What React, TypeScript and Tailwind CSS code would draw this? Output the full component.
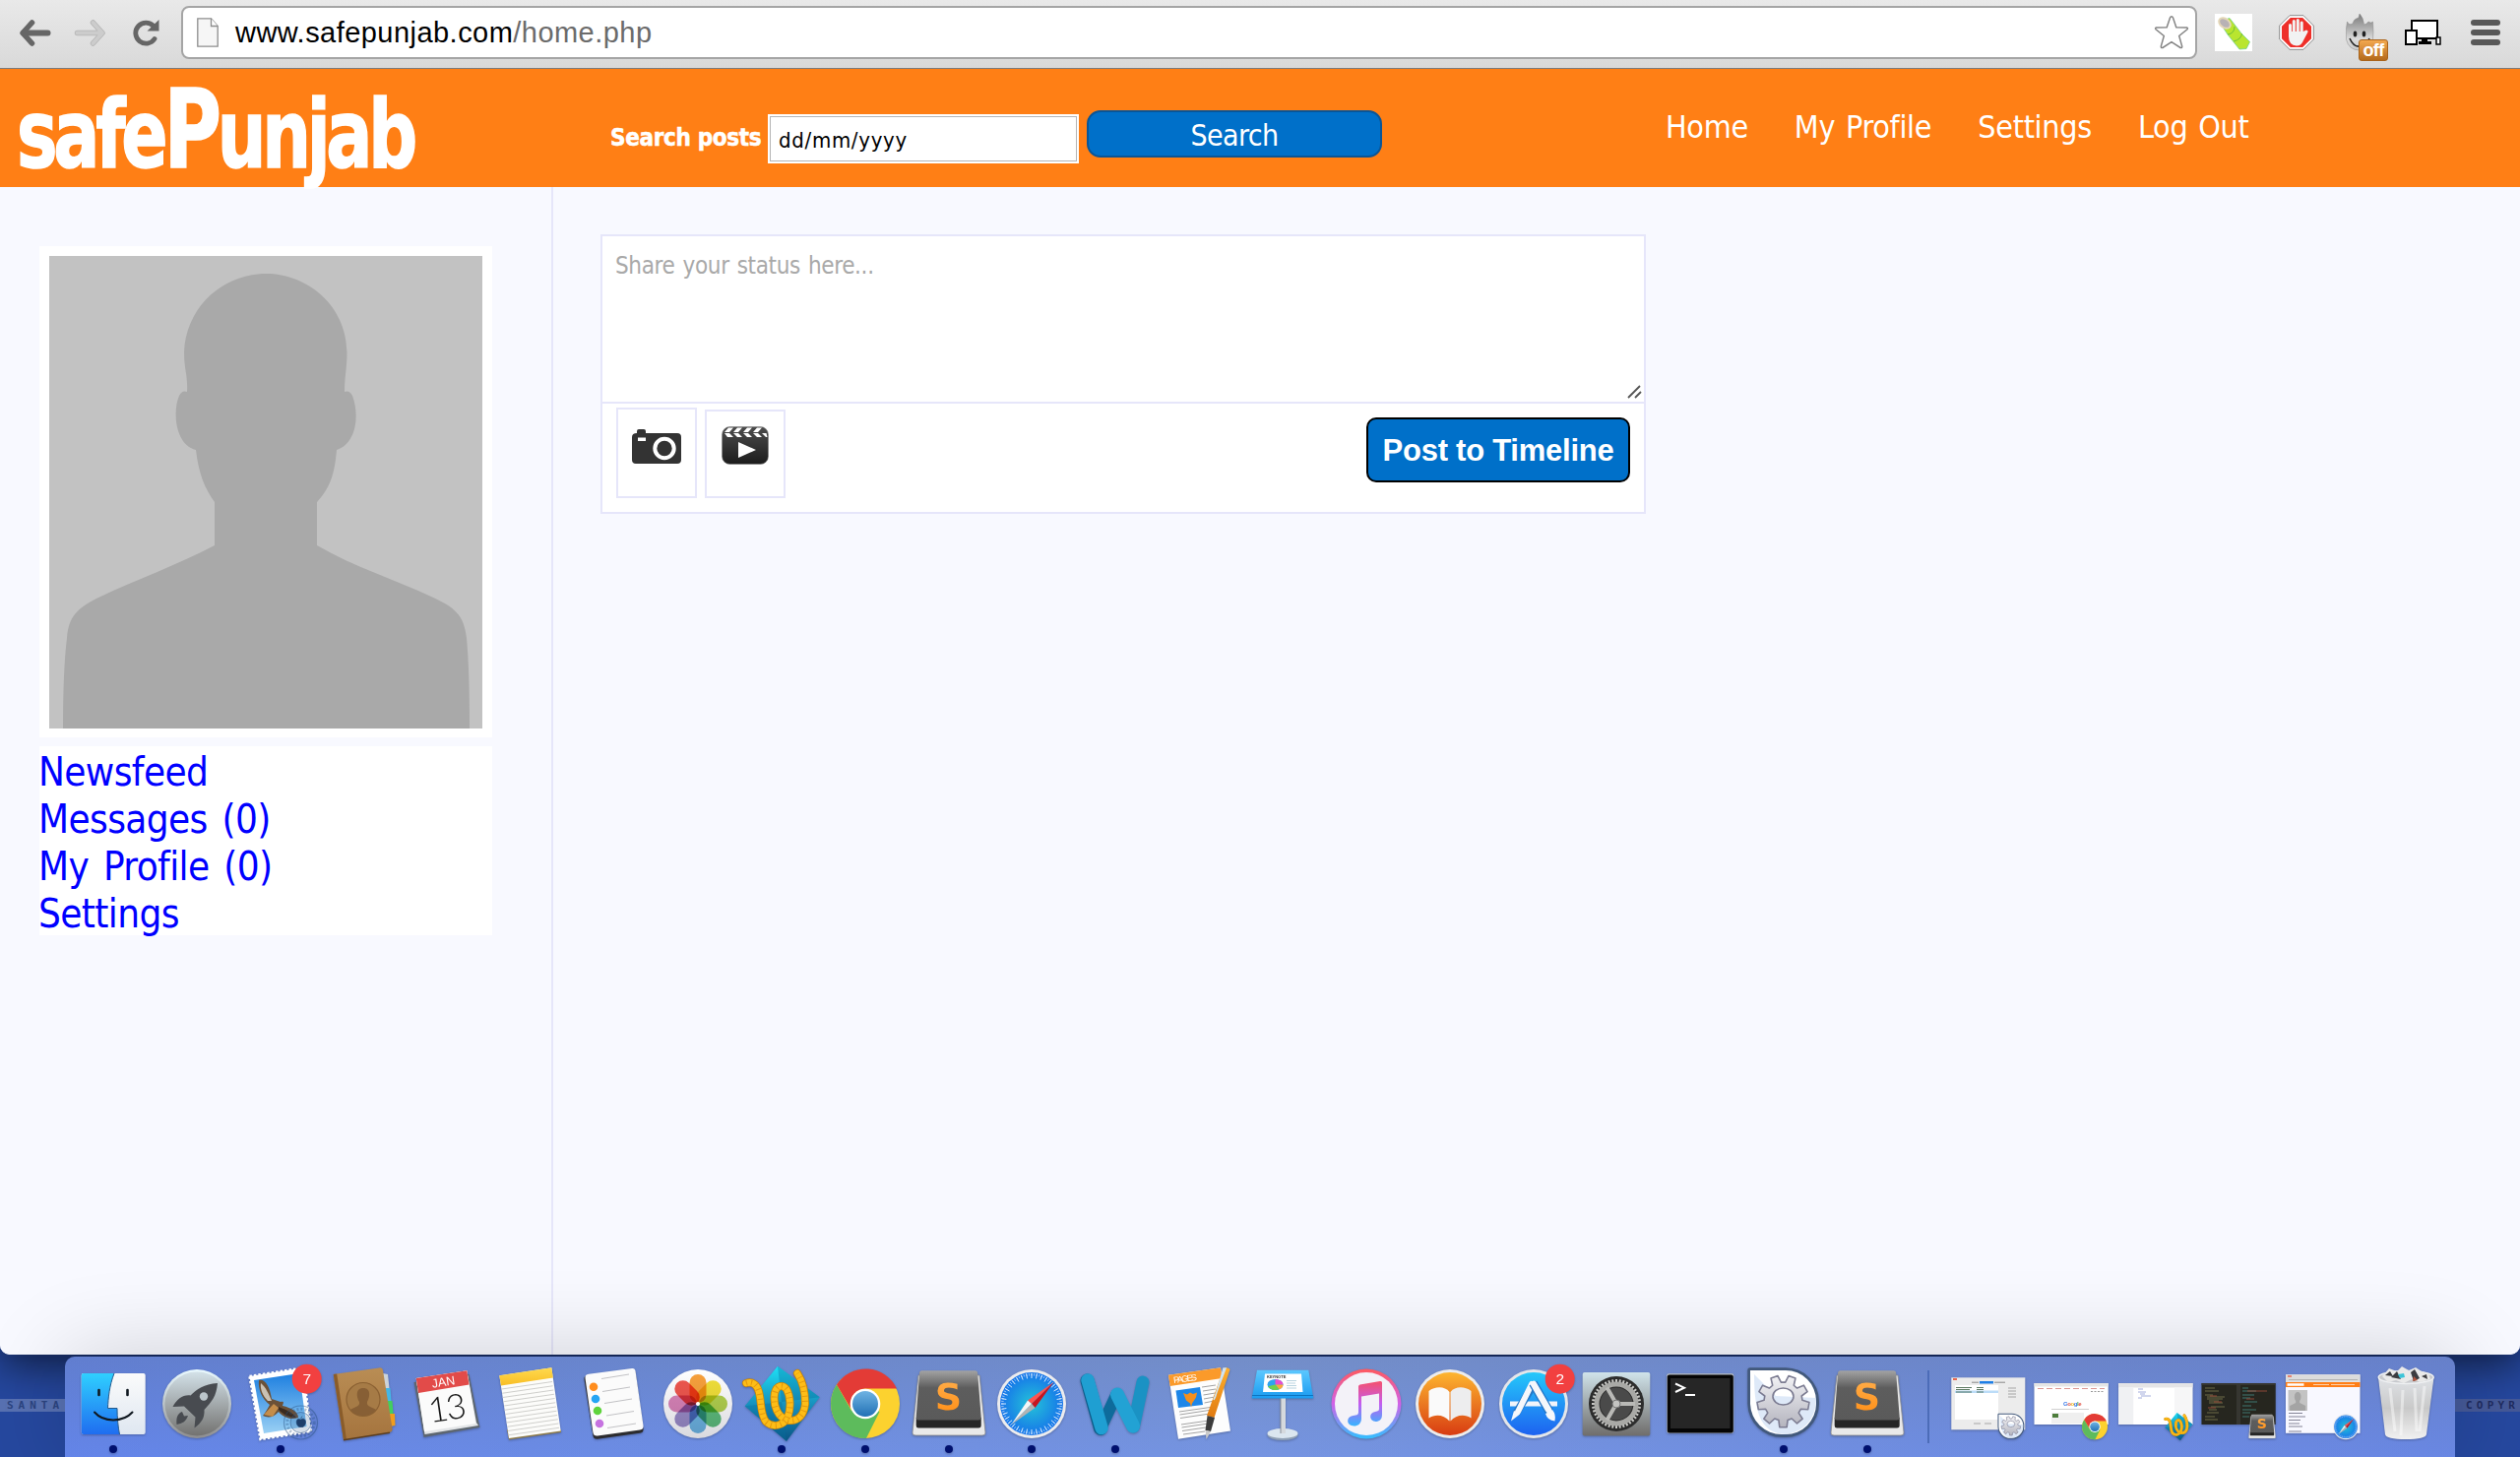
import React from 'react';

const SANS = "font-['DejaVu_Sans_Condensed','DejaVu_Sans',sans-serif] [font-stretch:condensed]";

function rays(n: number, cx: number, cy: number, r1: number, r2: number) {
  return Array.from({ length: n }, (_, i) => {
    const a = (i * 2 * Math.PI) / n;
    return `M${(cx + r1 * Math.cos(a)).toFixed(2)} ${(cy + r1 * Math.sin(a)).toFixed(2)}L${(cx + r2 * Math.cos(a)).toFixed(2)} ${(cy + r2 * Math.sin(a)).toFixed(2)}`;
  }).join('');
}

function gearPath(n: number, cx: number, cy: number, r1: number, r2: number) {
  const pts: string[] = [];
  const step = (2 * Math.PI) / n;
  for (let i = 0; i < n; i++) {
    const a = i * step - Math.PI / 2 + step / 2;
    [
      [-0.34, r1],
      [-0.2, r2],
      [0.2, r2],
      [0.34, r1],
    ].forEach(([o, r]) => {
      pts.push(`${(cx + r * Math.cos(a + o * step)).toFixed(2)} ${(cy + r * Math.sin(a + o * step)).toFixed(2)}`);
    });
  }
  return `M${pts.join('L')}Z`;
}

function Defs() {
  const g = (id: string, stops: [number, string][], x2 = 0, y2 = 1) => (
    <linearGradient key={id} id={id} x1="0" y1="0" x2={x2} y2={y2}>
      {stops.map(([o, c]) => (
        <stop key={o} offset={o} stopColor={c} />
      ))}
    </linearGradient>
  );
  return (
    <svg className="absolute h-0 w-0">
      <defs>
        {g('finder', [[0, '#2fd0ff'], [1, '#1f6df0']])}
        {g('paper', [[0, '#fbfbfb'], [1, '#dfe7f1']])}
        {g('launch', [[0, '#d3e1e8'], [1, '#737270']])}
        {g('rim', [[0, '#eafaff'], [1, '#8d8d8f']])}
        {g('sky', [[0, '#1d7fe0'], [1, '#9ad0f4']])}
        {g('book', [[0, '#b98d54'], [1, '#a5743e']])}
        {g('yellow', [[0, '#ffd94e'], [1, '#f8be25']])}
        {g('white', [[0, '#ffffff'], [1, '#d9d9de']])}
        {g('diamond', [[0, '#1de0f6'], [0.5, '#1792be'], [1, '#0a5585']])}
        {g('subl', [[0, '#a3a3a3'], [0.35, '#5d5d5d'], [1, '#5a5a5a']])}
        {g('sletter', [[0, '#ffb04e'], [1, '#ff8c12']])}
        {g('orange', [[0, '#fdb52f'], [1, '#d83c12']])}
        {g('store', [[0, '#25c8fa'], [1, '#1d62f0']])}
        {g('prefs', [[0, '#d0e3ea'], [1, '#6f6d6b']])}
        {g('wd', [[0, '#2bb5e3'], [1, '#1183b8']])}
        {g('key', [[0, '#5cc8ff'], [1, '#1a9bf0']])}
        {g('note', [[0, '#f5516c'], [0.5, '#c45cf0'], [1, '#36b4ff']])}
        {g('ring', [[0, '#ff5a5e'], [0.5, '#d061e8'], [1, '#33c0ff']])}
        {g('blueball', [[0, '#6fb3e3'], [1, '#2271b5']])}
        {g('flame', [[0, '#7a7a7a'], [0.35, '#a9a9a9'], [0.7, '#dcdcdc'], [1, '#c9c9c9']])}
        {g('clap', [[0, '#4c4c4c'], [1, '#1c1c1c']])}
        {g('pen', [[0, '#ffb02e'], [1, '#e07a10']])}
        {g('bin', [[0, '#dfe2e6'], [0.5, '#c9c9c9'], [1, '#f1f1f1']])}
        {g('gear', [[0, '#f2f2f5'], [1, '#b4b4be']])}
        <radialGradient id="safari">
          <stop offset="0" stopColor="#24c3d8" />
          <stop offset="1" stopColor="#1674ea" />
        </radialGradient>
      </defs>
    </svg>
  );
}

function Badge({ n }: { n: string }) {
  return (
    <g>
      <circle cx="68.7" cy="22.7" r="15" fill="#f24040" />
      <text x="68.7" y="28" textAnchor="middle" fontSize="15.500" fill="#fff" fontFamily="Liberation Sans, sans-serif">{n}</text>
    </g>
  );
}

const Finder = () => (
  <g>
    <rect x="9.7" y="17" width="65" height="62" rx="2" fill="url(#paper)" />
    <path d="M11.7 17H43C38 30 37 42 36.500 52.500H46C46 62 47 72 48.500 79H11.700a2 2 0 0 1-2-2V19a2 2 0 0 1 2-2z" fill="url(#finder)" />
    <path d="M43 17C38 30 37 42 36.500 52.500H46C46 62 47 72 48.500 79" fill="none" stroke="#245a8c" strokeWidth="1" />
    <path d="M27.500 34v5M56.500 34v5" stroke="#101820" strokeWidth="2.600" strokeLinecap="round" />
    <path d="M23 56.500C32 67 52 67 61.500 56.500" fill="none" stroke="#101820" strokeWidth="2" strokeLinecap="round" />
  </g>
);
const Launchpad = () => (
  <g>
    <circle cx="42" cy="48" r="35" fill="url(#rim)" />
    <circle cx="42" cy="48" r="32.500" fill="url(#launch)" />
    <path d="M63 27C49 28 42 33 35.500 39.500C28 38.500 22 43 17.500 51L29 50.500L40.500 61.500L39.500 72.500C47 67 50 62 49.500 54C57 46 62 40 63 27z" fill="#484b50" />
    <path d="M27 56C22 58 21 62 21.500 69C27 68 31 66 33 60L29 60.500z" fill="#484b50" />
    <circle cx="49" cy="40.500" r="4.200" fill="#bcc6cb" />
  </g>
);
const Mail = () => (
  <g>
    <path d="M10.500 20L64.500 11.500L73 76L21.500 84z" fill="#fff" stroke="#fff" strokeWidth="2.500" strokeDasharray="2.500 2" />
    <path d="M15 24L61 17L68.500 71L25 78z" fill="url(#sky)" />
    <path d="M20 24C26 22 31 30 33 43L42 46C46 45 45 47 44 50C53 52 60 56 60 62C52 65 44 61 40 56C34 63 28 62 24 60C27 56 29 53 31 49C23 43 19 33 20 24z" fill="#6b5138" />
    <path d="M22 27C27 31 30 38 33 45L29 45C24 40 21 33 22 27z" fill="#c9c1b4" />
    <path d="M25 59L35 48L40 52L34 61z" fill="#c48d4b" />
    <path d="M40 51C48 54 54 57 58 62C51 62 45 59 40 54z" fill="#3a2b20" />
    <circle cx="62.500" cy="67" r="17" fill="none" stroke="#29507f" strokeOpacity=".45" strokeWidth="1.200" />
    <circle cx="62.500" cy="67" r="10.500" fill="#2a5b93" fillOpacity=".2" stroke="#29507f" strokeOpacity=".5" />
    <circle cx="62.500" cy="67" r="13.700" fill="none" stroke="#29507f" strokeOpacity=".35" strokeWidth="3" strokeDasharray="2 2" />
    <path d="M62.500 64c3-2 5 0 5 2.500s-2 5-3 5h-3c-2 0-4-4-3-6.500s3-1.500 4-1zM62.500 63l1.500-2.500" fill="#1d3e6a" stroke="#1d3e6a" strokeWidth=".6" />
    <Badge n="7" />
  </g>
);
const Contacts = () => (
  <g>
    <path d="M61 17l5 1 1.500 14-5 1z" fill="#ccd3da" />
    <path d="M63 32l5.500 0 1 13-5 1z" fill="#44b7e6" />
    <path d="M64 45l6.500 0 1 13-5 1z" fill="#43cf5d" />
    <path d="M66 58l7 0 .5 12-5 1z" fill="#f09d1e" />
    <path d="M10.700 18L57 11.400Q60.500 11 61 14L70.500 73Q71 76.500 67.500 77L21 84.500z" fill="url(#book)" />
    <path d="M10.700 18l3.500-.5L24 84l-3 .7z" fill="#8a5c2a" />
    <path d="M21 84.700L68 77.300" stroke="#5c3d1c" strokeWidth="1.500" />
    <circle cx="41" cy="43.500" r="17" fill="#a67b46" stroke="#8a6032" strokeWidth="1.200" />
    <path d="M41 32c8 0 7 9 4 14-1 5 5 5 9 8-6 8-20 8-26 0 4-3 10-3 9-8-3-5-4-14 4-14z" fill="#875f35" />
  </g>
);
const Calendar = () => (
  <g>
    <path d="M8.500 26l56-8 11 54-57 10z" fill="#5d6670" />
    <path d="M10.700 22L62.300 14.300L72 67L74 70L19.500 79z" fill="#e4e6e8" />
    <path d="M10.700 22L62.300 14.300L71.300 68L19 76.300z" fill="#fbfbfb" />
    <path d="M10.700 22L62.300 14.300L64.500 28.500L13 37z" fill="#e24b49" />
    <text transform="translate(39 30) rotate(-8.500)" textAnchor="middle" fontSize="12.500" fill="#fff" fontFamily="Liberation Sans, sans-serif">JAN</text>
    <text transform="translate(43 64.500) rotate(-8.500)" textAnchor="middle" fontSize="35" fill="#161616" letterSpacing="-2" fontFamily="Lato, sans-serif" fontWeight="300">13</text>
  </g>
);
const Notes = () => (
  <g>
    <path d="M20 84.500L73 77v-3H18z" fill="#8c7a49" />
    <path d="M10.300 19.300L63.300 11.300L72.700 75.500L20 83z" fill="#fcfcfa" />
    <path d={Array.from({ length: 12 }, (_, i) => `M${12.5 + i * 0.64} ${33 + i * 4.25}l51.500-7.500`).join('')} stroke="#c9c9c6" strokeWidth=".9" fill="none" />
    <path d="M10.300 19.300L63.300 11.300L64.800 21.500L12 29.500z" fill="url(#yellow)" />
  </g>
);
const Reminders = () => (
  <g>
    <path d="M11.500 22Q11 18 15 17.700L59 12Q63 11.500 63.600 15L71.500 72Q72 76 68 76.500L25 82.500Q21 83 20.400 79z" fill="#2c2c2f" transform="translate(0 1.200)" />
    <path d="M12.500 22Q12 18 16 17.700L60 12Q63 11.500 63.600 15L71.500 70Q72 74 68 74.500L25 80.500Q21 81 20.400 77z" fill="#fbfbfb" />
    <circle cx="21" cy="30.700" r="4.300" fill="#ff8d1e" />
    <circle cx="23" cy="43" r="4.300" fill="#25a5f4" />
    <circle cx="25" cy="55" r="4.300" fill="#5fd33c" />
    <circle cx="27" cy="68" r="4.300" fill="#c673e0" />
    <path d="M29 22.500l28-4.500M30 35.500l28-4.500M32 47.500l28-4.500M34 60l28-4.500M35 72.500l29-4.500" stroke="#c2c2c5" strokeWidth="1" />
  </g>
);
const Photos = () => (
  <g>
    <circle cx="42" cy="48" r="35" fill="url(#white)" />
    {['#f79421', '#f0dc1e', '#a9cc35', '#48b56b', '#5aacdf', '#8d7cc0', '#d573ae', '#ee4035'].map((c, i) => (
      <rect key={c} x="33.500" y="18" width="17" height="29" rx="8.500" fill={c} fillOpacity=".88" transform={`rotate(${i * 45} 42 48)`} className="mix-blend-multiply" />
    ))}
    <circle cx="42" cy="48" r="2" fill="#fff" />
  </g>
);
const WebWork = () => {
  const d = 'M6 27C12 25 17 28 19 36C22 48 20 58 26 66C33 73 44 70 48 62C52 52 51 40 47 33C43 28 37 29 35 37C33 50 38 62 49 65C60 66 65 58 66 48C66 36 64 26 58 17';
  return (
    <g>
      <path d="M38 9.700L80.700 41.300L47 86L4.700 50.300z" fill="url(#diamond)" />
      <path d="M38 9.700L42 46L80.700 41.300zM42 46L47 86L4.700 50.300z" fill="#0a6c9c" fillOpacity=".35" />
      <path d={d} fill="none" stroke="#c98308" strokeWidth="8" strokeLinecap="round" />
      <path d={d} fill="none" stroke="#fdbd17" strokeWidth="6.500" strokeLinecap="round" />
      <path d={d} fill="none" stroke="#e59a0d" strokeWidth="6" strokeDasharray="1 4" />
    </g>
  );
};
const Chrome = () => (
  <g>
    <circle cx="42" cy="48" r="35" fill="#fcd22f" />
    <path d="M42 48L56.500 56L43 83A35 35 0 0 1 13 28.500L28 55z" fill="#5dbb5c" />
    <path d="M13 28.500A35 35 0 0 1 74 32.500H42A16 16 0 0 0 27.500 53z" fill="#e33b36" />
    <circle cx="42" cy="48" r="15.300" fill="#fff" />
    <circle cx="42" cy="48" r="13" fill="url(#blueball)" />
  </g>
);
const Sublime = () => (
  <g>
    <path d="M11 19H73L79 77Q79.500 80 76 80H8Q4.500 80 5 77z" fill="#e9e9e9" stroke="#8c8c8c" strokeWidth=".8" />
    <path d="M8.700 62H74.700V70Q74.700 72.500 72 72.500H11Q8.700 72.500 8.700 70z" fill="#262626" />
    <path d="M14.500 14.300H68.500Q71 14.300 71.200 17L74.700 61.500Q74.700 64.500 72 64.500H11Q8.500 64.500 8.700 61.500L12 17Q12.200 14.300 14.500 14.300z" fill="url(#subl)" />
    <text x="41.500" y="54" textAnchor="middle" fontSize="38" fontWeight="700" fill="url(#sletter)" fontFamily="DejaVu Sans, sans-serif" className="[font-stretch:normal]">S</text>
  </g>
);
const Safari = () => (
  <g>
    <circle cx="42" cy="48" r="35" fill="#ececee" />
    <circle cx="42" cy="48" r="32" fill="url(#safari)" />
    <path d={rays(36, 42, 48, 26, 31)} stroke="#e8f4ff" strokeWidth=".9" />
    <path d={rays(72, 42, 48, 28.5, 31)} stroke="#e8f4ff" strokeWidth=".6" />
    <path d="M64.500 26L38 44.500L42 48z" fill="#ff5350" />
    <path d="M64.500 26L45.500 52L42 48z" fill="#c9141e" />
    <path d="M21 69.500L38 44.500L42 48z" fill="#f5f5f5" />
    <path d="M21 69.500L45.500 52L42 48z" fill="#b3b3b3" />
  </g>
);
const Word = () => (
  <g fill="none" strokeLinecap="round" strokeLinejoin="round">
    <path d="M28 71L43 39" stroke="#0e6b9b" strokeWidth="12" />
    <path d="M60.500 71L70 26" stroke="#1a92c4" strokeWidth="13" />
    <path d="M13.500 24.500L27 73" stroke="#0c5c8a" strokeWidth="14" />
    <path d="M14 24L28 72.500" stroke="#1f9fd2" strokeWidth="13.500" />
    <path d="M44 38.500L60 70.500" stroke="#22a2d4" strokeWidth="14" />
  </g>
);
const Pages = () => (
  <g>
    <path d="M11 18.700L64 11.300L74 75.500L21 83.700z" fill="#fdfdfd" />
    <path d="M11 18.700L64 11.300L65.500 22L12.700 30z" fill="#fb9a2a" />
    <text transform="translate(16.500 27) rotate(-7.500)" fontSize="9" fill="#fff" fontFamily="Liberation Sans, sans-serif" letterSpacing="-1.600">PAGES</text>
    <path d="M18.500 34.500L43 31L46 49L21 52z" fill="#1d86e8" />
    <path d="M26 37l4 1.500 3-2 3 1.500 4-1.500-1 5-4 6-1 4-1-4-4-3z" fill="#f58f1d" />
    <path d="M45 31l14-2M46 35l13-2M46.500 39l12-2M47 43l11-2M47.500 47l10-2M22 56l35-5M22.500 59l33-5M23 62.500l30-4.500M24 69l28-4M24.500 72l27-4M25 75.500l24-3.500M26 79l22-3" stroke="#8b8b8b" strokeWidth=".8" />
    <path d="M67 12Q71 10 73.500 13L57.500 62L50 60z" fill="url(#pen)" />
    <path d="M67 12L69 12L57 44L58.500 41z" fill="#cfe4f3" stroke="#cfe4f3" strokeWidth="1.500" />
    <path d="M50.500 60L58 62L54 76L48.500 75z" fill="#3b3b3b" />
    <path d="M48.500 75L54 76L49.500 84z" fill="#c9c9c9" />
  </g>
);
const Keynote = () => (
  <g>
    <ellipse cx="42" cy="79.500" rx="15.500" ry="5.500" fill="#8fa0b5" />
    <ellipse cx="42" cy="78" rx="15.500" ry="5" fill="#dbe6ef" />
    <rect x="40" y="42" width="5" height="36" fill="#d5d9dd" />
    <path d="M40 42v36" stroke="#8b929a" />
    <path d="M16 13.700H68.300L73.300 42.500H10.700z" fill="url(#key)" />
    <path d="M11 39.500H73" stroke="#0d74c0" strokeWidth="1" />
    <path d="M24 17.500H61L62.500 36H22z" fill="#fff" />
    <text x="26" y="21.500" fontSize="4" fontWeight="700" fill="#333" fontFamily="Liberation Sans, sans-serif">KEYNOTE</text>
    <ellipse cx="34.500" cy="28.500" rx="8" ry="5.500" fill="#2ea3ee" />
    <path d="M34.500 28.500V23a8 5.500 0 0 1 8 5.500z" fill="#e74fd0" />
    <path d="M34.500 28.500h8a8 5.500 0 0 1-4 4.800z" fill="#ffa63a" />
    <path d="M34.500 28.500l4 4.800a8 5.500 0 0 1-11.500-3z" fill="#6fd04c" />
    <path d="M46 24.500h10M46 27h9M46 29.500h10M46 32h10" stroke="#b9d4e0" strokeWidth="1" />
  </g>
);
const ITunes = () => (
  <g>
    <circle cx="42" cy="48" r="35.500" fill="url(#ring)" />
    <circle cx="42" cy="48" r="32" fill="#f3f2f8" />
    <path d="M34 30.500Q34 28.800 35.500 28.500L56 25Q58 24.800 58 26.500V59C58 65 54 66 51.500 66C45 66 44 57 51 56C54 55.500 55 55 55 53V37.500L37 40.500V63C37 68 33.500 70.500 29.500 70.500C21.500 70.500 21 61 28.500 60C33 59.500 34 59 34 56z" fill="url(#note)" />
  </g>
);
const IBooks = () => (
  <g>
    <circle cx="42" cy="48" r="35" fill="#ececec" />
    <circle cx="42" cy="48" r="32" fill="url(#orange)" />
    <path d="M20.500 35C27 30 37 30 41.500 36V65.500C36 59 27 58 20.500 62.500z" fill="#fafafa" />
    <path d="M63.500 35C57 30 47 30 42.500 36V65.500C48 59 57 58 63.500 62.500z" fill="#ededee" />
  </g>
);
const AppStore = () => (
  <g>
    <circle cx="42" cy="48" r="35" fill="#e4e6ea" />
    <circle cx="42" cy="48" r="32" fill="url(#store)" />
    <path d="M18 48H66" stroke="#f1f4fa" strokeWidth="5" />
    <path d="M42 28L24 58" stroke="#2477c8" strokeWidth="8" />
    <path d="M40 28L26 56" stroke="#f5f7fb" strokeWidth="6" strokeLinecap="round" />
    <path d="M22 55l6 3.500-9 7z" fill="#f5f7fb" />
    <path d="M41.500 27L58 56" stroke="#2477c8" strokeWidth="9" />
    <path d="M42 28L57 54" stroke="#f5f7fb" strokeWidth="6.500" strokeLinecap="round" />
    <path d="M54 58l7-4q4 5 2.500 11.500Q56 65 54 58z" fill="#f5f7fb" />
    <Badge n="2" />
  </g>
);
const Prefs = () => (
  <g>
    <rect x="7.700" y="16" width="68.600" height="64.500" rx="2" fill="url(#prefs)" />
    <circle cx="42" cy="48" r="28" fill="#2c2c2c" />
    <path d={rays(40, 42, 48, 20, 25)} stroke="#c9c9c6" strokeWidth="2" />
    <circle cx="42" cy="48" r="20" fill="none" stroke="#a9a9a6" strokeWidth="5" />
    <circle cx="42" cy="48" r="16.500" fill="#4a4a4a" />
    <path d="M42 48H61M42 48L32.500 31.500M42 48L32.500 64.500" stroke="#b9b9b6" strokeWidth="4" />
    <circle cx="42" cy="48" r="4" fill="#c3c3c1" stroke="#777" />
  </g>
);
const Terminal = () => (
  <g>
    <rect x="8.300" y="17.300" width="68" height="60.500" rx="2" fill="#b9bfc4" />
    <rect x="8.800" y="18.500" width="67" height="59" rx="2" fill="#050505" />
    <rect x="12" y="22" width="60.500" height="51" fill="#262626" />
    <path d="M17 27.500L26 31.700L17 36" fill="none" stroke="#fff" strokeWidth="2" />
    <path d="M27 39H37" stroke="#fff" strokeWidth="2" />
  </g>
);
const GearApp = () => (
  <g>
    <path d="M8 11.300H44A34 34 0 0 1 78 45V48A34 34 0 0 1 44 82H40A34.700 34.700 0 0 1 5.300 48V14Q5.300 11.300 8 11.300z" fill="#42597c" />
    <path d="M8 14H44A31 31 0 0 1 75 45V48A31 31 0 0 1 44 79H40A32 32 0 0 1 8 48z" fill="#fff" />
    <path d="M12 18L34 40L75 42C75 60 66 76 44 79C20 78 12 60 12 18z" fill="#c8daf3" fillOpacity=".6" />
    <path fillRule="evenodd" d={`${gearPath(9, 41.5, 45.5, 19.5, 26.5)}M52 40.500a10.500 8.500 0 1 0-21 0a10.500 8.500 0 1 0 21 0z`} fill="url(#gear)" stroke="#7c7c92" strokeWidth="1.600" strokeLinejoin="round" />
  </g>
);
const Trash = () => (
  <g>
    <path d="M13 21L20 79Q21 84 41 84Q61 84 62 79L69.500 21z" fill="url(#bin)" />
    <ellipse cx="41.200" cy="21" rx="28" ry="6.500" fill="#c7c9cd" stroke="#eef0f2" strokeWidth="1.500" />
    <path d="M17 20l7-8 8 3 5-5 7 4 7-3 6 4 7 2 2 6-10 3-9-3-8 4-8-3-8 2z" fill="#e9e9e9" />
    <path d="M20 19l5-4 3 5zM26 21l6-6 4 8zM46 16l4-3 5 9-6 3zM57 20l5-2 1 5z" fill="#3c3c40" />
    <path d="M33 18l6-1 1 4-5 1z" fill="#3cc4d8" />
    <path d="M49 20l4 4-5 1z" fill="#b3543c" />
    <path d="M25 32l5 44M38 34l-2 46M50 32l2 44M60 30l-5 46" stroke="#fff" strokeOpacity=".45" strokeWidth="3" />
  </g>
);

function Mini({ children }: { children: React.ReactNode }) {
  return <g transform="translate(49.500 53.500) scale(.37)">{children}</g>;
}

const ThumbPanel = () => (
  <g>
    <rect x="4.300" y="21.300" width="75" height="53" fill="#ececec" />
    <path d="M6 23h4" stroke="#e9694f" strokeWidth="2" />
    <rect x="33" y="25" width="14" height="2.500" fill="#1e7fe6" />
    <path d="M25 26.200h7M48 26.200h11" stroke="#888" />
    <rect x="8" y="29" width="44" height="35" fill="#fff" />
    <rect x="8" y="34.500" width="44" height="2.500" fill="#bcdcf8" />
    <path d="M9 31.500h16M30 31.500h7M9 33.500h14M30 33.500h7M9 36h16M30 36h7" stroke="#4b6b50" strokeWidth=".9" />
    <path d="M62 32h8M62 35h8M62 38h8M62 41h8M27 68h7M38 68h7" stroke="#bdbdbd" strokeWidth="1.500" />
    <Mini><GearApp /></Mini>
  </g>
);
const ThumbGoogle = () => (
  <g>
    <rect x="3.500" y="27" width="75.200" height="42" fill="#fff" />
    <rect x="3.500" y="27" width="75.200" height="3.500" fill="#e5e5e5" />
    <path d="M7 32.500h68" stroke="#d98a86" strokeWidth=".9" strokeDasharray="6 3" />
    <text x="33" y="50" fontSize="6" fontFamily="Liberation Sans, sans-serif" fontWeight="700" letterSpacing="-.4"><tspan fill="#3d7be8">G</tspan><tspan fill="#e2493b">o</tspan><tspan fill="#efb41a">o</tspan><tspan fill="#3d7be8">g</tspan><tspan fill="#3aa455">l</tspan><tspan fill="#e2493b">e</tspan></text>
    <path d="M21 53.500h38" stroke="#d0d0d0" />
    <rect x="21" y="57" width="33" height="11" fill="#efefef" />
    <rect x="22" y="58" width="6" height="4" fill="#4d7d3b" />
    <path d="M61 35.500h13" stroke="#999" strokeDasharray="2 1.500" />
    <Mini><Chrome /></Mini>
  </g>
);
const ThumbEditor = () => (
  <g>
    <rect x="4.300" y="27" width="75.200" height="42" fill="#fff" />
    <rect x="4.300" y="27" width="75.200" height="4.500" fill="#e4e4e6" />
    <rect x="4.300" y="31.500" width="15" height="37.500" fill="#f0f1f3" />
    <rect x="61" y="31.500" width="18" height="37.500" fill="#f6f6f7" />
    <path d="M24 33h5M24 36h8M26 38h5M27 40h10M24 42h4" stroke="#98a4d8" strokeWidth=".9" />
    <Mini><WebWork /></Mini>
  </g>
);
const ThumbCode = () => (
  <g>
    <rect x="3.500" y="27" width="75.200" height="42" fill="#26261f" />
    <path d="M3.500 28h75M40 28v41M42 28v41" stroke="#3c3c38" strokeWidth="1.500" />
    <path d="M7 32h10M7 35h14M7 39h8M9 41h18M9 43h16M11 45h10M11 47h14M13 51h14M11 54h8M9 57h12M7 61h10M7 64h13" stroke="#77754c" strokeWidth=".9" />
    <path d="M45 32h6M45 35h14M45 39h12M45 42h8M47 46h13M45 50h9M45 54h14M45 57h8M45 61h7" stroke="#417f78" strokeWidth=".9" />
    <path d="M12 40h7M16 46h8M10 52h8M50 35h20M49 43h8" stroke="#a8503f" strokeWidth=".8" />
    <Mini><Sublime /></Mini>
  </g>
);
const ThumbSite = () => (
  <g>
    <rect x="4" y="18.300" width="75.500" height="59.500" fill="#f8f8ff" />
    <rect x="4" y="18.300" width="75.500" height="7.500" fill="#dcdcdc" />
    <path d="M6 20h4" stroke="#e9694f" strokeWidth="1.500" />
    <path d="M7 23.500h70" stroke="#a8a8a8" strokeWidth=".8" />
    <rect x="4" y="26" width="75.500" height="5" fill="#ff7e16" />
    <path d="M5.500 28.500h17" stroke="#fff" strokeWidth="2.500" />
    <path d="M32 28.500h16M50 28.500h24" stroke="#ffd0a8" />
    <rect x="6.500" y="34" width="19.500" height="21" fill="#c3c3c3" />
    <path d="M16.200 36c4 0 4 7 2 9v2l6 3v5h-16v-5l6-3v-2c-2-2-2-9 2-9z" fill="#a4a4a4" />
    <path d="M7 57.500h14M7 61h17M7 64.500h12M7 68h11M7 71h14M7 76h13" stroke="#76768a" strokeWidth=".9" />
    <Mini><Safari /></Mini>
  </g>
);

function Slot({ children, running, wide }: { children: React.ReactNode; running?: boolean; wide?: boolean }) {
  return (
    <div className={wide ? 'h-[102px] w-[85px] shrink-0' : 'h-[102px] w-[84.86px] shrink-0'}>
      <svg viewBox="0 0 84 102" className="mx-auto h-[102px] w-[84px] overflow-visible drop-shadow-[0_1px_1px_rgba(0,0,0,0.25)]">
        {children}
        {running && <circle cx="42" cy="94" r="4" fill="#00106e" />}
      </svg>
    </div>
  );
}

function Toolbar() {
  return (
    <div className="flex h-[70px] shrink-0 items-start border-b border-[#7b7b7b] bg-linear-to-b from-[#e9e9e9] to-[#d9d9d9] pl-5">
      <svg viewBox="0 0 32 28" className="mt-5 h-7 w-8" fill="none" stroke="#666" strokeLinejoin="round" strokeLinecap="round">
        <path d="M12.500 3L3 13.500L12.500 24" strokeWidth="5.500" />
        <path d="M4 13.500H28.500" strokeWidth="6" />
      </svg>
      <svg viewBox="0 0 32 28" className="mt-5 ml-[23px] h-7 w-8" fill="none" strokeLinejoin="round" strokeLinecap="round">
        <path d="M19.500 3L29 13.500L19.500 24M28 13.500H3.500" strokeWidth="5.500" stroke="#b5b5b5" />
        <path d="M19.500 3L29 13.500L19.500 24M28 13.500H3.500" strokeWidth="4" stroke="#cccccc" />
      </svg>
      <svg viewBox="0 0 28 28" className="mt-[19px] ml-[27px] h-7 w-7">
        <path d="M22 7.500A10.500 10.500 0 1 0 23 20.500" fill="none" stroke="#666" strokeWidth="4.800" strokeLinecap="round" />
        <path d="M27.500 1V12.500H15.500z" fill="#666" />
      </svg>
      <div className="mt-1.5 ml-[22px] flex h-[54px] w-[2048px] items-center rounded-lg border-2 border-[#a5a5a5] bg-white pr-1.5 pl-[14px]">
        <svg viewBox="0 0 22 30" className="h-[30px] w-[22px]">
          <path d="M.8.800H14.500L21.200 8.500V29.200H.8z" fill="#f6f6f6" stroke="#8d8d8d" strokeWidth="1.300" />
          <path d="M14.500.8V8.500H21.200" fill="#fff" stroke="#8d8d8d" strokeWidth="1.300" />
        </svg>
        <div className="ml-[17px] pt-px font-['Liberation_Sans',sans-serif] text-[29px] leading-none tracking-[0.46px] text-black">
          www.safepunjab.com<span className="text-[#6b6b6b]">/home.php</span>
        </div>
        <svg viewBox="0 0 36 36" className="ml-auto h-9 w-9">
          <path d="M18 1.800Q19 1.800 19.500 3L22.800 12.800L33.500 13Q35 13.500 34 14.800L25.700 21.500L28.700 32Q28.800 34 27 33.500L18 27.700L9 33.500Q7.200 34 7.300 32L10.300 21.500L2 14.800Q1 13.500 2.500 13L13.200 12.800L16.500 3Q17 1.800 18 1.800z" fill="#fff" stroke="#858585" strokeWidth="1.500" />
        </svg>
      </div>
      <svg viewBox="0 0 38 38" className="mt-3.5 ml-[18px] h-[38px] w-[38px] bg-white">
        <path d="M4.500 8L15 4.500L27 20L35.500 28.500L32 35.500L25 36L13 21z" fill="#b9e52f" stroke="#6fcf8b" strokeWidth=".8" />
        <ellipse cx="10" cy="9.500" rx="6.500" ry="4.500" transform="rotate(38 10 9.500)" fill="#b8b2b5" stroke="#e4d7b7" strokeWidth="2" />
        <path d="M13 21Q20 20 20 13M19 28Q27 26 27.500 20" fill="none" stroke="#6fbf3a" />
      </svg>
      <svg viewBox="0 0 36 36" className="mt-[15px] ml-[27px] h-9 w-9">
        <path d="M11 .7H25L35.300 11V25L25 35.300H11L.7 25V11z" fill="#fff" stroke="#8b8b8b" strokeWidth="1" />
        <path d="M11.800 3H24.200L33 11.800V24.200L24.200 33H11.800L3 24.200V11.800z" fill="#ee2f29" />
        <path d="M11.500 21V10.500M15.300 19V6.500M19.300 19V5.500M23.200 20V8" stroke="#f2f2f2" strokeWidth="3" strokeLinecap="round" />
        <path d="M10 17H24.700L28 15.500Q30.500 16 29 18.500L25 26Q23 31.500 18 31.500Q10 31 10 22z" fill="#f2f2f2" />
      </svg>
      <div className="relative mt-3.5 ml-8 h-12 w-11">
        <svg viewBox="0 0 44 48" className="h-12 w-11">
          <path d="M14 0Q18 4 18.500 11Q21 11 23 8Q26 10 27.500 8Q28.500 20 27.500 26Q25 37 14 37Q3 37 .5 26Q-.5 17 1.500 8Q3 12 7 10Q8 5 13 4z" fill="url(#flame)" stroke="#8a8a8a" strokeWidth=".5" />
          <path d="M4 25Q8 34 14 33Q20 33 24 25" fill="none" stroke="#222" strokeWidth="1.600" />
          <ellipse cx="9.500" cy="20.500" rx="1.800" ry="3" fill="#222" />
          <ellipse cx="18.500" cy="20.500" rx="1.800" ry="3" fill="#222" />
        </svg>
        <div className="absolute top-[26px] left-[13px] flex h-[22px] w-[30px] items-center justify-center rounded-[3px] border border-[#a8631b] bg-linear-to-b from-[#f3a84f] to-[#b46a1b] font-['Liberation_Sans',sans-serif] text-[18px] leading-none font-bold tracking-[-0.6px] text-white">off</div>
      </div>
      <svg viewBox="0 0 37 26" className="mt-5 ml-4 h-[26px] w-[37px]" fill="#fff" stroke="#000" strokeWidth="2">
        <rect x="7" y="1" width="26" height="18" />
        <path d="M17 19h6v3h4v3H14v-3h3z" fill="#000" stroke="none" />
        <rect x="1" y="11" width="11" height="14" />
        <rect x="32" y="18" width="4" height="7" strokeWidth="1.500" />
      </svg>
      <div className="mt-5 ml-[30px] flex w-[30px] flex-col gap-1">
        <div className="h-1.5 rounded-full bg-[#585858]" />
        <div className="h-1.5 rounded-full bg-[#585858]" />
        <div className="h-1.5 rounded-full bg-[#585858]" />
      </div>
    </div>
  );
}

function Header() {
  return (
    <header className="flex h-[120px] shrink-0 items-start bg-[#ff7f15] text-white">
      <div className="h-[120px] w-[620px] shrink-0 pl-[17px]">
        <div className="mt-0.5 w-max origin-left scale-x-[0.8] text-[97px] leading-[120px] font-bold tracking-[-5.3px] whitespace-nowrap [-webkit-text-stroke:1.500px_white]">
          safe<span className="text-[111px]">P</span>unjab
        </div>
      </div>
      <div className="mt-[50px] w-40 shrink-0 text-[24px] leading-10 font-bold tracking-[-0.35px] whitespace-nowrap [-webkit-text-stroke:0.500px_white]">Search posts</div>
      <div className="mt-[46px] h-[50px] w-[316px] shrink-0 border-2 border-white bg-white">
        <div className="h-full border border-[#b5b5b5] pl-2 text-[22px] leading-[47px] tracking-[0.7px] text-black">dd/mm/yyyy</div>
      </div>
      <div className="mt-[42px] ml-2 flex h-12 w-[300px] shrink-0 items-center justify-center rounded-[14px] border-2 border-[#0a5596] bg-[#0070c9] pt-1 text-[30px] leading-none tracking-[-0.6px]">Search</div>
      <nav className="mt-[39px] ml-[288px] flex gap-[47px] text-[32px] leading-10 tracking-[-0.3px] [word-spacing:2px] whitespace-nowrap">
        <a>Home</a>
        <a>My Profile</a>
        <a>Settings</a>
        <a>Log Out</a>
      </nav>
    </header>
  );
}

function Sidebar() {
  return (
    <aside className="w-[562px] shrink-0 border-r-2 border-[#e6e6fa] pt-[60px] pl-10">
      <div className="flex h-[499px] w-[460px] justify-center bg-white pt-2.5">
        <svg viewBox="0 0 440 480" className="h-[480px] w-[440px] bg-[#c2c2c2]">
          <path d="M220 18C262 18 302 50 302.500 98C302.500 115 300 122 300 138Q305 136 308 142C315 160 313 190 292 197C290 222 285 236 272 250V294C310 316 350 328 388 346C412 357 421 364 424 388Q427 420 427 480H14Q14 420 18 388C20 366 28 358 50 347C90 328 130 314 168 294V250C158 236 152 222 149 197C128 192 125 158 132 142Q135 136 140 138C141 122 137 115 137 98C139 50 178 18 220 18z" fill="#a9a9a9" />
        </svg>
      </div>
      <ul className="mt-[9px] h-48 w-[460px] bg-white text-[40px] leading-12 tracking-[-0.6px] text-[#0000ff] [word-spacing:4px]">
        {['Newsfeed', 'Messages (0)', 'My Profile (0)', 'Settings'].map((t) => (
          <li key={t} className="-ml-px h-12 pt-0.5">{t}</li>
        ))}
      </ul>
    </aside>
  );
}

function Composer() {
  return (
    <section className="mt-12 ml-12 h-[284px] w-[1062px] border-2 border-[#e6e6fa] bg-white">
      <div className="relative h-[170px] border-b-2 border-[#e6e6fa] pt-2.5 pl-[13px] text-[24px] leading-10 tracking-[-0.35px] text-[#a9a9a9] [word-spacing:1.500px]">
        Share your status here...
        <svg viewBox="0 0 16 16" className="absolute right-0.5 bottom-0.5 h-4 w-4" stroke="#555" strokeWidth="1.800">
          <path d="M2 14L14 2M9 14L15 8" />
        </svg>
      </div>
      <div className="flex items-start pl-3.5">
        <div className="mt-1 flex h-[92px] w-[82px] justify-center border-2 border-[#e6e6fa] pt-[19px]">
          <svg viewBox="0 0 50 37" className="h-[37px] w-[50px]">
            <path d="M5 5V3Q5 1 7 1H12Q14 1 14 3V5H46Q50 5 50 9V32Q50 36 46 36H4Q0 36 0 32V9Q0 5 5 5z" fill="#333" />
            <rect x="6" y="9.500" width="8" height="3.500" fill="#fff" />
            <circle cx="33" cy="20.500" r="9.700" fill="#333" stroke="#fff" strokeWidth="4" />
          </svg>
        </div>
        <div className="mt-1.5 ml-2 flex h-[90px] w-[82px] justify-center border-2 border-[#e6e6fa] pt-[15px]">
          <svg viewBox="0 0 48 39" className="h-[39px] w-12">
            <rect x=".5" y=".5" width="47" height="38" rx="8" fill="url(#clap)" stroke="#888" strokeWidth=".6" />
            <path d="M7 1.500l5 0-4 4.500h-5zM16 1.500h5l-4 4.500h-5zM26 1.500h5l-4 4.500h-5zM36 1.500h5l-4 4.500h-5zM3 7h5l4 4h-6zM12 7h5l4 4h-5zM22 7h5l4 4h-5zM32 7h5l4 4h-5zM41 7h4.500l1 4H45z" fill="#fff" />
            <path d="M17 16L35 24L17 32z" fill="#fff" />
          </svg>
        </div>
        <div className="mt-3.5 mr-3.5 ml-auto flex h-[66px] w-[268px] items-center justify-center rounded-[10px] border-2 border-black bg-[#0070c9] pt-px font-['Liberation_Sans',sans-serif] text-[31px] leading-none font-bold tracking-[-0.25px] whitespace-nowrap text-white">Post to Timeline</div>
      </div>
    </section>
  );
}

function Dock() {
  return (
    <div className="relative mt-0.5 flex h-[102px] w-[2428px] shrink-0 rounded-t-[10px] bg-linear-to-r from-[#6585e3] via-[#7c99da] to-[#6c88dc] pl-[6.500px] shadow-[0_0_90px_rgba(0,0,0,0.18)]">
      <div className="pointer-events-none absolute inset-0 rounded-t-[10px] bg-linear-to-b from-[#50607f]/20 to-[#5c82ff]/20" />
      <div className="relative flex">
        <Slot running><Finder /></Slot>
        <Slot><Launchpad /></Slot>
        <Slot running><Mail /></Slot>
        <Slot><Contacts /></Slot>
        <Slot><Calendar /></Slot>
        <Slot><Notes /></Slot>
        <Slot><Reminders /></Slot>
        <Slot><Photos /></Slot>
        <Slot running><WebWork /></Slot>
        <Slot running><Chrome /></Slot>
        <Slot running><Sublime /></Slot>
        <Slot running><Safari /></Slot>
        <Slot running><Word /></Slot>
        <Slot><Pages /></Slot>
        <Slot><Keynote /></Slot>
        <Slot><ITunes /></Slot>
        <Slot><IBooks /></Slot>
        <Slot><AppStore /></Slot>
        <Slot><Prefs /></Slot>
        <Slot><Terminal /></Slot>
        <Slot running><GearApp /></Slot>
        <Slot running><Sublime /></Slot>
        <div className="mt-3.5 mr-[17px] ml-[19px] h-[74px] w-0.5 bg-[#4c6cb8]" />
        <Slot wide><ThumbPanel /></Slot>
        <Slot wide><ThumbGoogle /></Slot>
        <Slot wide><ThumbEditor /></Slot>
        <Slot wide><ThumbCode /></Slot>
        <Slot wide><ThumbSite /></Slot>
        <Slot wide><Trash /></Slot>
      </div>
    </div>
  );
}

export default function App() {
  return (
    <div className={`flex h-[1480px] w-[2560px] flex-col overflow-hidden bg-[#26489f] ${SANS}`}>
      <Defs />
      <div className="flex h-[1376px] shrink-0 flex-col overflow-hidden rounded-b-[10px] bg-[#f8f8ff] shadow-[0_10px_40px_rgba(0,0,0,0.6)]">
        <Toolbar />
        <Header />
        <div className="flex grow bg-[#f8f9ff]">
          <Sidebar />
          <Composer />
        </div>
      </div>
      <div className="flex h-[104px] shrink-0">
        <div className="w-[66px] shrink-0 pt-[45px]">
          <div className="h-[13px] bg-[#6d83ba]/70 pl-[7px] font-['DejaVu_Sans_Mono',monospace] text-[11px] leading-[13px] font-bold tracking-[5px] whitespace-nowrap text-[#2b4480]">SANTA</div>
        </div>
        <Dock />
        <div className="w-[66px] shrink-0 pt-[45px]">
          <div className="h-[13px] bg-[#4d5e96]/80 pl-[11px] font-['DejaVu_Sans_Mono',monospace] text-[11px] leading-[13px] font-bold tracking-[4.200px] whitespace-nowrap text-[#1f2c60]">COPYR</div>
        </div>
      </div>
    </div>
  );
}
